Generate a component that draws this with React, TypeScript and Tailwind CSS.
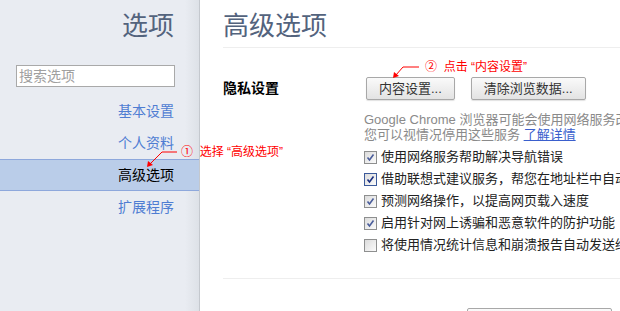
import React from "react";

const FONT = "font-['Liberation_Sans','Noto_Sans_CJK_SC',sans-serif]";

function Checkbox({ checked, focused }: { checked: boolean; focused?: boolean }) {
  return (
    <span
      className={`w-[13px] h-[13px] shrink-0 border flex items-center justify-center bg-gradient-to-br from-[#dcdcdc] to-[#fbfbfb] ${
        focused ? "border-[#3c5a9a]" : "border-[#8e8f8f]"
      }`}
    >
      {checked && (
        <svg width="9" height="9" viewBox="0 0 9 9">
          <path d="M1.5 4.5 L3.5 7 L7.5 1.5" fill="none" stroke={focused ? "#1a2f80" : "#4a5d9b"} strokeWidth="1.6" />
        </svg>
      )}
    </span>
  );
}

function Button({ children }: { children: React.ReactNode }) {
  return (
    <button className="h-[23px] px-[12px] border border-[#a8a8a8] rounded-[2px] bg-gradient-to-b from-[#fafafa] to-[#e3e3e3] text-[13px] leading-none text-[#333] shadow-[0_1px_1px_rgba(0,0,0,0.12)]">
      {children}
    </button>
  );
}

const navItems = [
  { label: "基本设置", active: false },
  { label: "个人资料", active: false },
  { label: "高级选项", active: true },
  { label: "扩展程序", active: false },
];

const options = [
  { label: "使用网络服务帮助解决导航错误", checked: true },
  { label: "借助联想式建议服务，帮您在地址栏中自动完成搜索和网址", checked: true, focused: true },
  { label: "预测网络操作，以提高网页载入速度", checked: true },
  { label: "启用针对网上诱骗和恶意软件的防护功能", checked: true },
  { label: "将使用情况统计信息和崩溃报告自动发送给 Google", checked: false },
];

export default function App() {
  return (
    <div className={`relative w-[620px] h-[311px] flex overflow-hidden bg-white ${FONT}`}>
      {/* Sidebar */}
      <aside className="w-[200px] shrink-0 border-r border-[#c4c8ce] bg-[linear-gradient(to_right,#e9ecf2_93%,#dde1e7)]">
        <h1 className="pt-[11px] pr-[25px] text-right text-[26px] leading-[30px] text-[#53637d]">选项</h1>
        <div className="mt-[24px] ml-[16px] w-[159px] h-[22px] border border-[#a9a9a9] bg-white flex items-center px-[2px] text-[14px] text-[#a0a0a0]">
          搜索选项
        </div>
        <nav className="mt-[8px] flex flex-col">
          {navItems.map((item) =>
            item.active ? (
              <div
                key={item.label}
                className="h-[32px] flex items-center justify-end pr-[25px] bg-[#bacde9] border-y border-[#8ea8dc] text-[14px] text-black"
              >
                {item.label}
              </div>
            ) : (
              <div key={item.label} className="h-[32px] flex items-center justify-end pr-[25px] text-[14px] text-[#4f7dd2]">
                {item.label}
              </div>
            )
          )}
        </nav>
      </aside>

      {/* Main */}
      <main className="flex-1 min-w-0 pl-[23px]">
        <h2 className="pt-[11px] pb-[6px] text-[26px] leading-[30px] text-[#53637d] border-b border-[#eeeeee]">高级选项</h2>

        <div className="mt-[29px] flex">
          <div className="w-[141px] shrink-0 h-[23px] flex items-center text-[14px] font-bold text-black">隐私设置</div>
          <div className="flex-1 min-w-0">
            <div className="flex gap-[16px] pl-[2px]">
              <Button>内容设置...</Button>
              <Button>清除浏览数据...</Button>
            </div>
            <p className="mt-[12px] text-[13px] leading-[15px] text-[#8a8a8a] whitespace-nowrap">
              Google Chrome 浏览器可能会使用网络服务改善您的浏览体验。
              <br />
              您可以视情况停用这些服务 <span className="text-[#3a5fcd] underline">了解详情</span>
            </p>
            <div className="mt-[4px] flex flex-col">
              {options.map((o) => (
                <div key={o.label} className="h-[22px] flex items-center gap-[4px] whitespace-nowrap text-[13px] text-[#222]">
                  <Checkbox checked={o.checked} focused={o.focused} />
                  <span>{o.label}</span>
                </div>
              ))}
            </div>
          </div>
        </div>

        <div className="mt-[22px] border-t border-[#eeeeee]" />
        <div className="mt-[29px] pl-[244px]">
          <div className="w-[145px] h-[23px] border border-[#a8a8a8] rounded-[2px] bg-gradient-to-b from-[#fafafa] to-[#e3e3e3]" />
        </div>
      </main>

      {/* Annotations */}
      <svg className="absolute left-0 top-0 pointer-events-none" width="620" height="311">
        <polyline points="177,152 162,152 150,164" fill="none" stroke="#ff0000" strokeWidth="1" />
        <polygon points="147,167 148,161 153,165" fill="#ff0000" />
        <polyline points="419,67 403,67 396,75" fill="none" stroke="#ff0000" strokeWidth="1" />
        <polygon points="393,78 394,72 399,76" fill="#ff0000" />
      </svg>
      <div className="absolute left-[181px] top-[143px] text-[12px] leading-[18px] text-[#ff0000] whitespace-nowrap">
        ①&nbsp; 选择 “高级选项”
      </div>
      <div className="absolute left-[425px] top-[58px] text-[12px] leading-[18px] text-[#ff0000] whitespace-nowrap">
        ②&nbsp; 点击 “内容设置”
      </div>
    </div>
  );
}
